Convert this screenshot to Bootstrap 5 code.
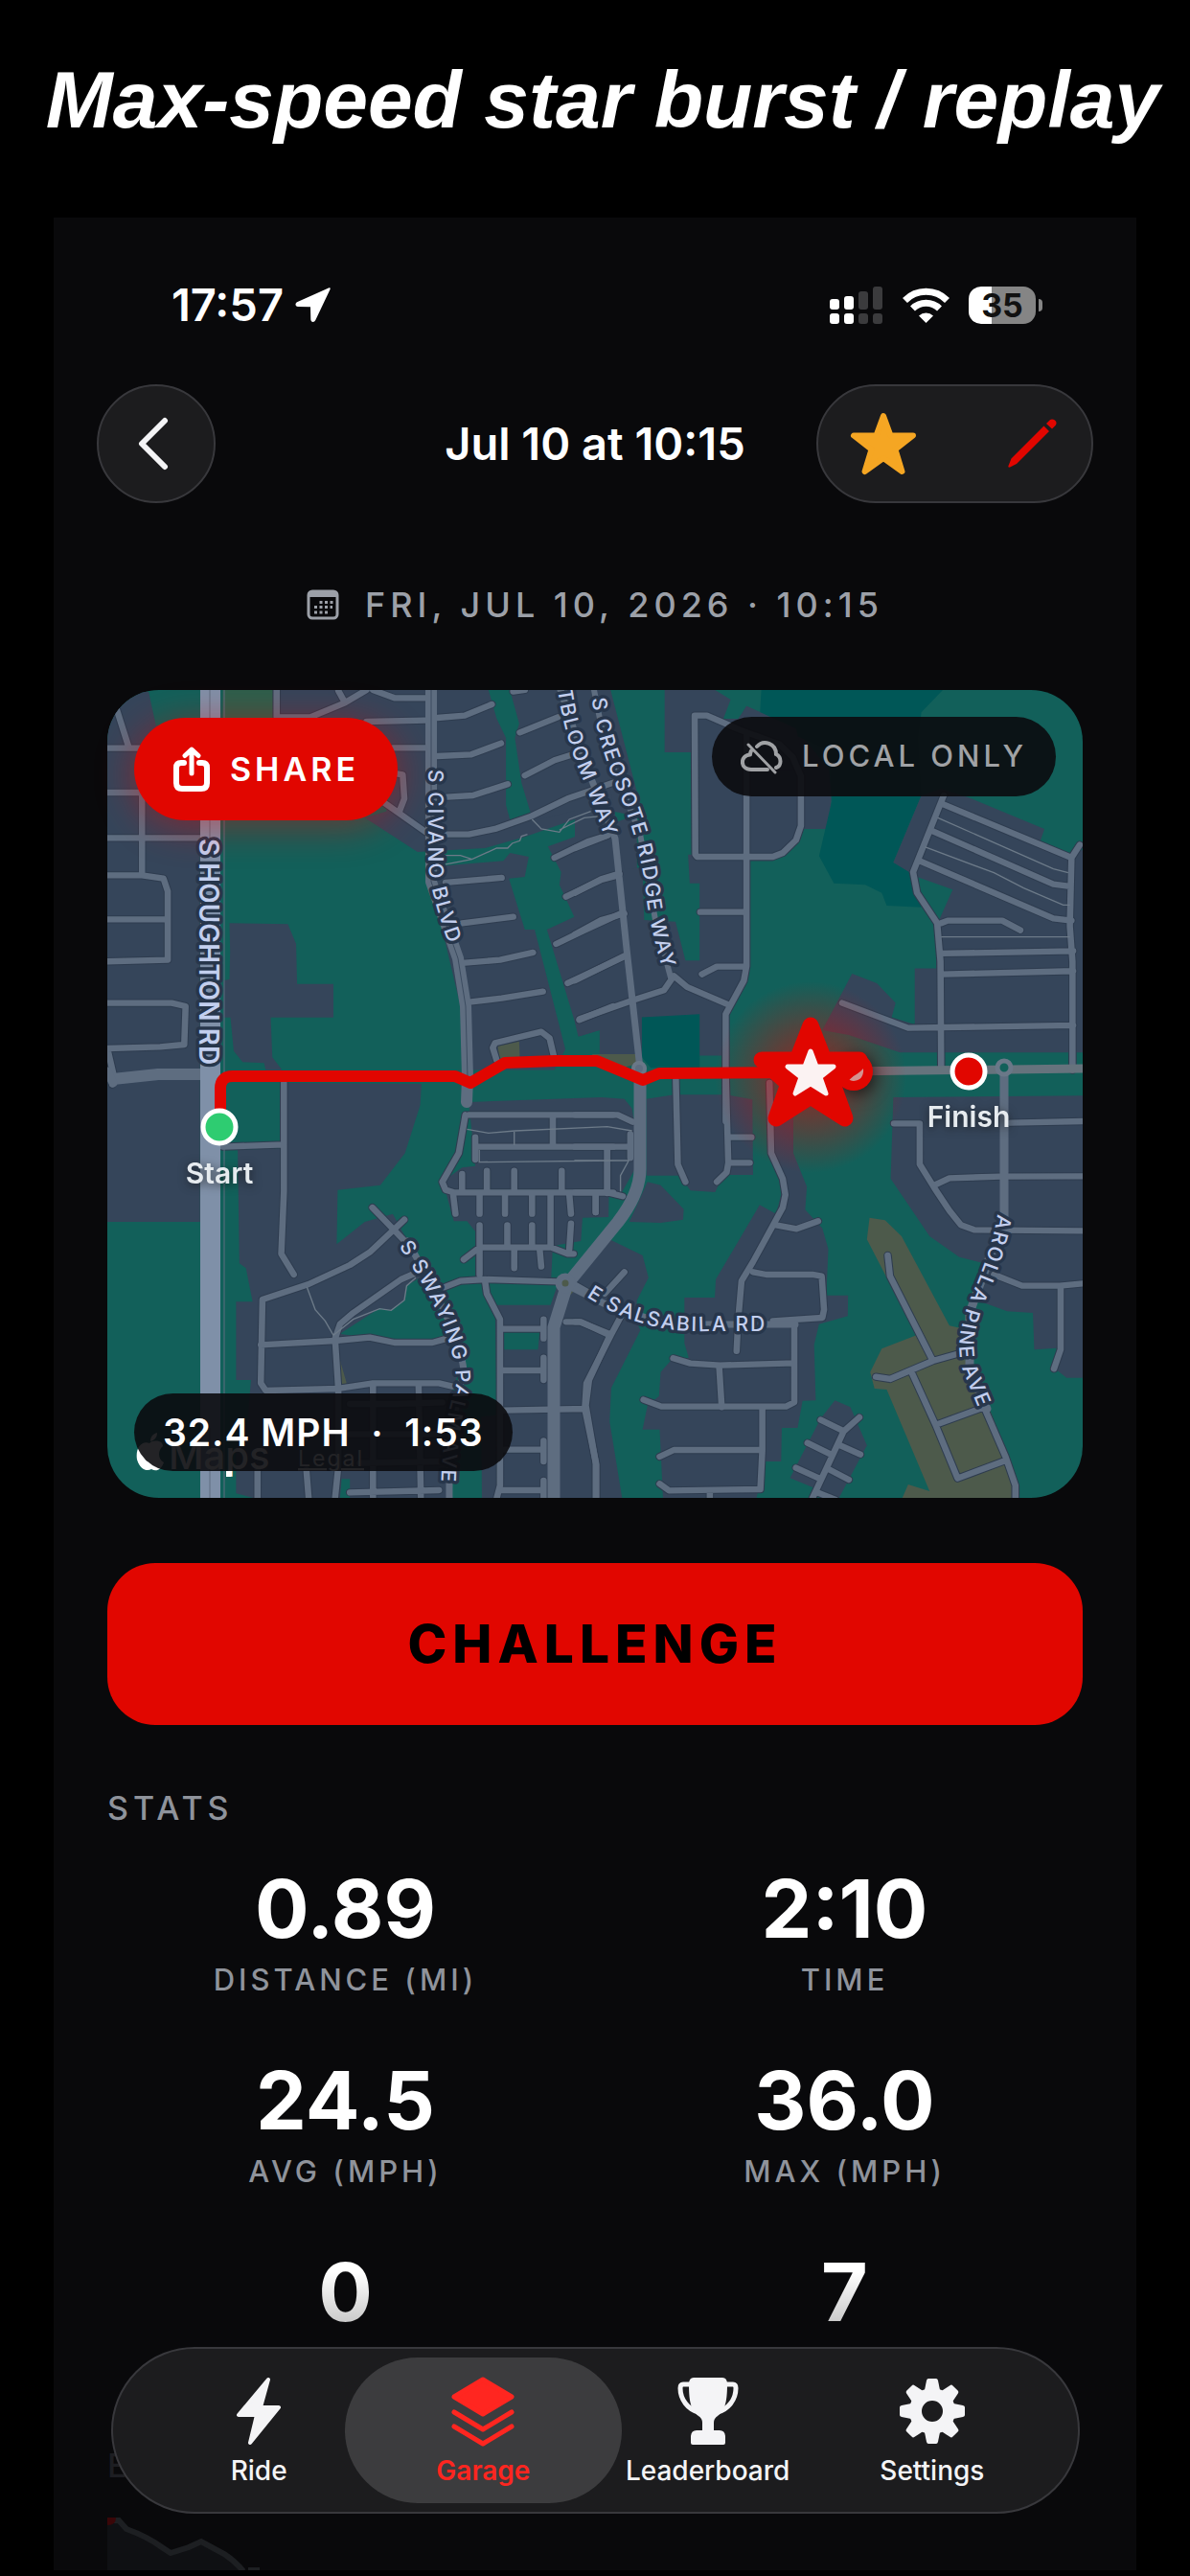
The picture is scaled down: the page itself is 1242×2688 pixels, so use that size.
<!DOCTYPE html>
<html lang="en">
<head>
<meta charset="utf-8">
<meta name="viewport" content="width=device-width, initial-scale=1">
<title>Ride detail</title>
<link href="https://cdn.jsdelivr.net/npm/bootstrap@5.3.0/dist/css/bootstrap.min.css" rel="stylesheet">
<script src="https://cdn.jsdelivr.net/npm/bootstrap@5.3.0/dist/js/bootstrap.bundle.min.js"></script>
<style>
  body { background: #000; color: #fff; font-family: Inter, "Liberation Sans", sans-serif; font-weight: 600; }
  svg { display: block; }
  .headline { height: 227px; padding: 0 0 19px 16px; font: italic 700 84px/1 "Liberation Sans", sans-serif; }
  .phone { margin: 0 56px 5px; padding: 62px 56px 0; background: #09090b; overflow: hidden; }
  .statusbar { height: 58px; padding: 0 42px 0 67px; font-size: 47px; line-height: 58px; }
  .status-time { gap: 12px; }
  .status-icons { gap: 20px; }
  .battery { width: 70px; height: 39px; border-radius: 13px; font-size: 34px; font-weight: 700; line-height: 39px; color: #111; background: linear-gradient(90deg, #fff 35%, #858585 35%); }
  .battery-tip { width: 4px; height: 13px; margin-left: 3px; border-radius: 0 4px 4px 0; background: #858585; }
  .topnav { margin: 54px -11px 0; }
  .topnav h1 { font-size: 47px; line-height: 56px; font-weight: 600; grid-column: 2; }
  .topnav-grid { display: grid; grid-template-columns: 1fr auto 1fr; align-items: center; }
  .glass { height: 124px; border: 2px solid #38383c; border-radius: 62px; background: #1c1c1e; padding: 0; color: #fff; }
  .glass-round { width: 124px; }
  .glass-pair { width: 289px; padding: 0 33px; }
  .icon-btn { background: none; border: 0; padding: 0; }
  .ride-date { margin-top: 84px; height: 44px; gap: 27px; font-size: 36px; line-height: 44px; font-weight: 500; letter-spacing: 5px; color: #9ca0a8; }
  .map-card { margin-top: 67px; border-radius: 54px; background: #12605a; }
  .map-clip { border-radius: 54px; overflow: hidden; }
  .map-clip svg { width: 100%; height: auto; }
  .map-share { left: 28px; top: 29px; height: 107px; border: 0; border-radius: 54px; padding: 0 40px; gap: 20px; background: #e10600; color: #fff; font-size: 34px; font-weight: 600; letter-spacing: 4px; box-shadow: 0 6px 40px rgba(225,6,0,.45); }
  .map-pill { background: rgba(11,11,14,.9); border-radius: 42px; }
  .map-local { right: 28px; top: 28px; height: 83px; padding: 0 30px; gap: 20px; font-size: 31px; font-weight: 500; letter-spacing: 4px; color: #a0a2a5; }
  .map-speed { left: 28px; bottom: 28px; height: 81px; padding: 0 30px; font-size: 39px; line-height: 81px; white-space: pre; letter-spacing: 1px; }
  .challenge { margin-top: 68px; height: 169px; border: 0; border-radius: 50px; background: #e10600; color: #000; font-size: 55px; font-weight: 800; letter-spacing: 6px; }
  .section-title { margin: 67px 0 43px; font-size: 34px; line-height: 40px; font-weight: 500; letter-spacing: 5px; color: #8f939b; }
  .stats-grid { row-gap: 66px; }
  .stats-grid .value { font-size: 84px; line-height: 84px; font-weight: 700; }
  .stats-grid .caption-text { margin-top: 14px; font-size: 31px; line-height: 36px; font-weight: 500; letter-spacing: 4px; color: #8f939b; }
  .stats-grid .fading { background: linear-gradient(#fff 25%, #c8c8c8 90%); -webkit-background-clip: text; background-clip: text; color: transparent; }
  .elevation-title { margin: 69px 0 34px; color: #1d1e22; }
  .tabs { left: 60px; right: 59px; bottom: 59px; height: 174px; padding: 0 35px; border: 2px solid #38383c; border-radius: 87px; background: #1c1c1e; }
  .tabs a { flex: 1 1 0; padding-top: 28px; color: #f4f4f6; font-size: 28px; line-height: 32px; font-weight: 500; }
  .tabs a svg { margin-bottom: 9px; }
  .tabs a.current { color: #ff2620; font-weight: 600; }
  .tabs a.current::before { content: ""; position: absolute; inset: 9px -27px; border-radius: 76px; background: #3c3c3e; }
  .tabs a.current > * { position: relative; }
  .slate { fill: #35455a; } .olive { fill: #4d5a4b; } .deep { fill: #005757; }
  .road { fill: none; stroke: #5e6d80; stroke-width: 19; stroke-linecap: round; stroke-linejoin: round; }
  .edge { fill: none; stroke: #2e3c4f; stroke-width: 25; stroke-linecap: round; stroke-linejoin: round; }
  .trail { fill: none; stroke: #6c7a88; stroke-width: 4; }
  .street { font: 500 21px Inter, sans-serif; fill: #c3cfee; stroke: #27364b; stroke-width: 7px; paint-order: stroke; stroke-linejoin: round; letter-spacing: 2px; }
  .street .arterial { font-size: 28px; font-weight: 600; letter-spacing: 0; }
  .pin-label { font: 600 30px Inter, sans-serif; fill: #e6ebef; text-anchor: middle; filter: drop-shadow(0 2px 5px #111a); }
</style>
</head>
<body>
<header class="headline d-flex align-items-center justify-content-center text-nowrap">Max-speed star burst / replay</header>

<main class="phone position-relative">
  <div class="statusbar d-flex align-items-center justify-content-between">
    <div class="status-time d-flex align-items-center"><span>17:57</span>
      <svg width="38" height="38" viewBox="0 0 38 38" fill="#fff"><path d="M35 1.500 2.500 16C-.5 17.500 0 21 3 21l13 .3.3 13c0 3 3.600 3.700 5 .7L36.500 3C37 1.500 36.500 1 35 1.500Z"/></svg>
    </div>
    <div class="status-icons d-flex align-items-center">
      <svg width="56" height="39" viewBox="0 0 56 39"><g fill="#fff"><rect x="0" y="13" width="10" height="11" rx="3"/><rect x="15" y="10" width="10" height="14" rx="3"/><rect x="0" y="28" width="10" height="11" rx="3"/><rect x="15" y="28" width="10" height="11" rx="3"/></g><g fill="#3b3b3d"><rect x="30" y="5" width="10" height="19" rx="3"/><rect x="45" y="0" width="10" height="24" rx="3"/><rect x="30" y="28" width="10" height="11" rx="3"/><rect x="45" y="28" width="10" height="11" rx="3"/></g></svg>
      <svg width="49" height="37" viewBox="0 0 49 37" fill="none" stroke="#fff" stroke-width="7"><path d="M2.500 13.500a31 31 0 0 1 44 0M10.500 22a20 20 0 0 1 28 0"/><path d="M24.500 37 17 29.500a11 11 0 0 1 15 0Z" fill="#fff" stroke="none"/></svg>
      <div class="d-flex align-items-center"><div class="battery text-center">35</div><div class="battery-tip"></div></div>
    </div>
  </div>

  <nav class="topnav topnav-grid" aria-label="Ride">
    <button class="glass glass-round d-flex align-items-center justify-content-center" aria-label="Back"><svg width="40" height="56" viewBox="0 0 40 56" fill="none" stroke="#f4f4f6" stroke-width="6" stroke-linecap="round" stroke-linejoin="round"><path d="M29 4 5 28l24 24"/></svg></button>
    <h1 class="m-0 text-nowrap">Jul 10 at 10:15</h1>
    <div class="glass glass-pair d-flex align-items-center justify-content-between ms-auto">
      <button class="icon-btn" aria-label="Favourite"><svg width="70" height="68" viewBox="0 0 70 68" fill="#f5a623" stroke="#f5a623" stroke-width="6" stroke-linejoin="round"><path d="M35 5 42.500 25.500H66L47.500 40 54.500 63 35 49 15.500 63 22.500 40 4 25.500H27.500Z"/></svg></button>
      <button class="icon-btn" aria-label="Edit"><svg width="54" height="52" viewBox="0 0 54 52" fill="#e10600"><path d="M37.500 7.500 43 13 9 47 2 50.500C.5 51 0 50 .5 49L3.500 41.500ZM40 5 43.500 1.500C45 0 47 0 49 1.500S51 5.500 49.500 7L46 10.500Z"/></svg></button>
    </div>
  </nav>

  <div class="ride-date d-flex align-items-center justify-content-center text-nowrap">
    <svg width="34" height="32" viewBox="0 0 34 32"><rect x="2" y="2" width="30" height="28" rx="4" fill="none" stroke="#9ca0a8" stroke-width="3"/><path d="M2 3h30v5H2Z" fill="#9ca0a8"/><path d="M13.500 13.500h14M8 18.500h19M8 24h14" stroke="#9ca0a8" stroke-width="3" stroke-dasharray="3 2.500"/></svg>
    <span>FRI, JUL 10, 2026 · 10:15</span>
  </div>

  <section class="map-card position-relative" aria-label="Route map">
    <div class="map-clip">
    <svg viewBox="112 720 1018 843">
      <defs>
        <radialGradient id="glow"><stop offset=".3" stop-color="#e10600" stop-opacity=".45"/><stop offset="1" stop-color="#e10600" stop-opacity="0"/></radialGradient>
        <path id="houghton" d="M208 875V1140"/>
        <path id="civano" d="M447 803V900Q449 940 482 1020"/>
        <path id="bloom" d="M581 712Q588 765 605 805Q618 835 640 900"/>
        <path id="creosote" d="M618 729Q622 770 645 825Q668 880 674 930Q678 975 704 1050"/>
        <path id="swaying" d="M416 1300Q477 1390 476 1445Q457 1500 461 1600"/>
        <path id="salsabila" d="M612 1353Q670 1392 740 1389H850"/>
        <path id="arolla" d="M1041 1267Q1036 1300 1017 1345Q992 1400 1007 1435L1040 1515"/>

        <g id="net-nw">
          <path d="M60 500 100 630M35 632H200M35 771H140M140 771V1030M35 913H318M35 1030H140L205 1040 218 1080V1295L35 1300M35 1168H218"/>
          <path d="M548 452V535H650L755 490 735 452M755 490 820 450M840 450 905 475H1000M1035 537 1118 530 1200 495M820 549 1000 545M900 631H1000M1035 657 1138 652 1228 617M1065 785 1143 780 1248 745M1050 902H1130L1210 885 1320 845 1430 790 1500 765 1568 740M912 712 930 715 935 790 920 830M870 800 1000 895M1060 1053 1230 1038M1110 1180 1265 1160M1265 455 1300 450M1285 583 1400 535M1300 718 1390 670 1450 650M1390 975 1490 925 1550 905M1425 1097 1530 1045 1585 1030M1395 1245 1475 1205 1590 1150M1430 1368 1600 1285M1465 1483 1568 1440"/>
          <path d="M1110 1305 1225 1295 1325 1272M1125 1428 1230 1415 1355 1394M1215 1610 1203 1570 1210 1555 1350 1520 1375 1540 1390 1605"/>
        </g>
        <g id="net-ne">
          <path d="M365 965 363 530H400L500 575 620 620 660 660 685 720V875L670 920 630 960 600 972H370ZM520 590V1315L512 1360 457 1465V1800M380 1145H520M385 1340 430 1316H515M465 1435 340 1380 300 1345 270 1390 180 1420 15 1480M0 1085 80 1042 135 1025M0 1215 80 1170 150 1150M0 945 100 905M0 1360 155 1280"/>
          <path d="M1118 780 1025 1020 1037 1085 1098 1180 1108 1300 1110 1640M1110 805 1505 975 1530 935M1080 890 1450 1058 1500 1065M1045 985 1450 1165 1505 1172M1505 975 1500 1190 1508 1300V1640M1110 1180 1130 1172H1295L1350 1202M1110 1275 1510 1267M1115 1340 1510 1330M810 1430 1010 1508 1510 1500"/>
        </g>
        <g id="net-w">
          <path d="M35 290H230L272 300 268 420 195 427 35 432M37 440 55 520 50 545M385 740 570 733M570 540V880L562 1075 600 1140M1130 640H1568M1385 640V740M1150 710V780M1150 740H1568M1550 740V880M1120 640 1100 760 1050 850 1060 875 1085 883H1568M1110 825V880M1185 815V880M1268 815V880M1412 815V880M1083 890 1090 950M1163 890V950M1240 890V950M1322 890V950M1378 890V1050M1435 890 1440 950M1515 890V945M1163 985V1140M1247 985V1050M1322 985V1050M1440 980 1435 1060M1115 1093 1163 1055H1380L1430 1075H1448M1268 1060V1120M1345 1060 1350 1115"/>
        </g>
        <g id="net-e">
          <path d="M0 640H130L175 662M0 740H168M168 700V775M98 740V885M0 883H98L145 895M63 890V945M306 530 312 795 335 850M457 500 465 790 460 820 430 850M470 710H535M470 790H530M590 540 595 760 630 840 638 890 630 930 540 1100 505 1160 495 1280 490 1380M610 985 672 997 737 973M967 667H1045M1320 665 1539 660M1045 667V795L1090 870 1135 940 1170 985 1210 1000 1539 1003M1090 860 1135 838 1290 833 1539 832"/>
        </g>
        <g id="net-sw">
          <path d="M838 30 950 150M935 68 830 170 770 210 645 270 505 318 500 580 515 603 735 597 840 580H1040L1080 590M500 460 725 447 830 437 905 453H1020L1065 440M735 600 725 440 740 395 780 360 925 255 965 237M735 600 735 840 725 940M840 580V940M978 580 985 940M490 850V940M638 850 645 940M770 922 1040 915M770 645H910L1050 640M770 740H1040M800 830 1050 825M1055 280 1105 260 1180 255 1400 262M1180 265 1185 300 1225 380V900L1215 940M1225 410H1357M1357 380V440M1225 540H1357M1357 500V570M1235 665 1485 660M1240 788H1357M1357 760V825M1225 915H1357M1357 885V940M1440 265 1500 300M1425 388H1470L1558 430 1495 570 1485 650 1515 830V940"/>
        </g>
        <g id="net-se">
          <path d="M0 388H15L110 428 35 580 30 660 65 835V940M150 232 90 300M110 428 140 370M540 232 580 240H720L748 245 755 350 750 375 600 385M665 385V640L640 653H262L208 632M298 502 350 518 440 524 665 517M437 524 445 655M568 655V790L562 912 285 916 257 895M257 810 300 789H565M409 920V940M745 695 815 730 862 687M815 730 720 940M705 767 780 805M670 845 745 880M805 775 865 803M770 850 830 882M730 920 790 945M948 180 955 245 1085 510M912 560 955 567 1085 510 1165 487M1020 545 1095 715 1160 878 1305 822M1095 710 1240 655M1240 655 1305 810 1335 900V940M1270 240 1355 275H1470L1539 268M1472 275V475L1452 535"/>
        </g>
      </defs>

      <!-- land cover -->
      <g transform="translate(100 570) scale(.3444 .3333)">
        <path class="slate" d="M35 450 160 455 182 560 316 600V2115H35Z"/>
        <path fill="#2c5f4c" d="M385 450H540L548 540H385Z"/>
        <path class="slate" d="M540 450H1190L1215 540 1243 600V810L1258 867 1490 785 1520 830 1300 910 1180 945 975 957 815 850 880 830 912 700 800 540H548Z"/>
        <path class="slate" d="M1255 450H1560L1660 850 1520 820 1500 815 1325 860 1290 740 1270 600 1283 555Z"/>
        <path class="slate" d="M1005 1000H1060L1235 985 1255 960 1312 972 1300 1035 1252 1040 1300 1200H1330L1423 1575 1390 1640H1110L1105 1440 1050 1200Z"/>
        <path class="slate" d="M1370 940 1640 840V1530L1525 1515 1465 1535 1367 1200 1450 1160 1405 1060 1410 1020Z"/>
      </g>
      <g transform="translate(600 570) scale(.3444 .3333)">
        <path class="slate" d="M0 450H50L120 830 150 1012 205 1005 210 1170 305 1175 335 1297H378V1055H348L343 965H355V645H272V450H425L472 480 450 540H495L520 500 670 570 770 700 778 790 767 885H690L600 985H528V1340L465 1460V1595H75V1515L10 1535 0 1490Z"/>
        <path class="deep" d="M203 1475 378 1465V1633H230L203 1600ZM565 450H1115L1050 520 1040 600 1050 780 965 990 1037 1020 1030 1070 1050 1130 945 1125 930 1085 880 1060 785 1055 740 970 778 800 770 640 560 540Z"/>
        <path class="slate" d="M1050 780 1110 760 1190 785 1423 885 1410 925 1500 965 1539 950V1585L985 1585 830 1530 750 1515 840 1338 915 1368 972 1430 960 1475 1030 1497V1322H1095V1190L1145 1075 1037 1035 965 990Z"/>
        <path class="slate" d="M500 540 520 500 670 570 700 700 560 700Z"/>
        <path class="olive" d="M50 1590H185L190 1620 120 1640Z"/>
      </g>
      <g transform="translate(100 950) scale(.3444 .3333)">
        <path class="slate" d="M405 40 582 43 607 105 610 230H720V335H530L535 460 565 500H515L510 478 445 475 418 440 408 335H388V220L405 215 407 130Z"/>
        <path class="slate" d="M1130 600 1532 585 1602 590 1625 620 1650 780 1590 890H1555L1554 960 1475 962 1470 1035 1385 1050 1380 1150H1150V1005L1125 973H1085L1060 880 1050 850 1110 805 1150 800Z"/>
        <path class="olive" d="M1218 425 1283 410 1285 465 1225 475Z"/>
      </g>
      <g transform="translate(600 950) scale(.3444 .3333)">
        <path class="slate" d="M217 590 300 577H460L538 592 540 828H450L425 882 350 877 318 830H217ZM165 975 220 850 260 860 330 935 328 968 260 978Z"/>
      </g>
      <g transform="translate(100 1250) scale(.3444 .3333)">
        <path class="slate" d="M430-150 560-155 575-360 987-357 983-290 937-140 862-40 733-25 730 145 815 75 900 50 1000 240 940 275 935 320 895 352 860 345 740 425 830 440 1020 455 1060 440 1110 520 1080 600 1130 700 1070 860 1080 940H770V880H745L740 940H480L425 925V780L460 700 470 570H425V325H475L455 220 435 205Z"/>
        <path class="slate" d="M1210 335H1378L1400 270 1440 230 1557 130 1657 180 1675 250 1640 320 1637 380 1650 415 1562 595 1557 700 1595 940H1170L1168 685 1215 680Z"/>
        <path fill="#12605a" d="M1237 420H1345L1340 475H1237Z"/>
        <path class="olive" d="M735 490 760 580 745 600ZM1400 270 1435 255 1450 290 1415 330Z"/>
      </g>
      <g transform="translate(600 1250) scale(.3444 .3333)">
        <path class="slate" d="M598-300 662-260V-140L703-35 698 37 750 95 768 160 762 305H828L827 370 740 395 725 460 730 634 690 635 675 720H627L625 825 578 825 550 940H267L257 725H205L220 650 255 620 260 545 290 510 345 500 332 455V312H424L427 255 560 22 610 50 635-50 600-140Z"/>
        <path class="slate" d="M788 634 835 655 885 775 800 940 652 877 745 690Z"/>
        <path class="olive" d="M893 62 940 70 990 120 1135 400 1170 408V480L1260 670 1330 860 1340 940H992L1010 897 1075 918 945 600 908 597 895 545 930 472 1035 430 885 130Z"/>
        <path class="slate" d="M965-315 1539-320V563H1490L1450 530 1460 470 1392 475 1388 360 1310 355 1230 325 1240 205 1165 185 1075 120 990-10 957-60Z"/>
      </g>

      <!-- road casings, then road surfaces -->
      <g class="edge">
        <use href="#net-nw" transform="translate(100 570) scale(.3444 .3333)"/><use href="#net-ne" transform="translate(600 570) scale(.3444 .3333)"/>
        <use href="#net-w" transform="translate(100 950) scale(.3444 .3333)"/><use href="#net-e" transform="translate(600 950) scale(.3444 .3333)"/>
        <use href="#net-sw" transform="translate(100 1250) scale(.3444 .3333)"/><use href="#net-se" transform="translate(600 1250) scale(.3444 .3333)"/>
      </g>
      <g class="road">
        <use href="#net-nw" transform="translate(100 570) scale(.3444 .3333)"/><use href="#net-ne" transform="translate(600 570) scale(.3444 .3333)"/>
        <use href="#net-w" transform="translate(100 950) scale(.3444 .3333)"/><use href="#net-e" transform="translate(600 950) scale(.3444 .3333)"/>
        <use href="#net-sw" transform="translate(100 1250) scale(.3444 .3333)"/><use href="#net-se" transform="translate(600 1250) scale(.3444 .3333)"/>
      </g>
      <!-- main roads -->
      <g fill="none" stroke-linejoin="round" stroke-linecap="round">
        <path d="M450 720V920L478 1000 486 1050 488 1125 487 1150" stroke="#5e6d80" stroke-width="12"/>
        <path d="M450 720V920L478 1000 486 1050 488 1125" stroke="#3c4c60" stroke-width="1"/>
        <path d="M118 1126 165 1121H222" stroke="#5e6d80" stroke-width="12"/>
        <path d="M112 1118 118 1130" stroke="#5e6d80" stroke-width="9"/>
        <path d="M585 720 612 800 642 875 654 990 668 1115" stroke="#5e6d80" stroke-width="7"/>
        <path d="M620 720 628 760 640 800 668 870 684 960 700 1020" stroke="#5e6d80" stroke-width="6"/>
        <path d="M668 1115V1220Q668 1245 645 1275L592 1340 578 1385V1563" stroke="#5e6d80" stroke-width="13"/>
        <path d="M800 1119 1130 1115" stroke="#66737d" stroke-width="9"/>
        <path d="M1048 1120V1270L1012 1370V1430L1030 1470" stroke="#5e6d80" stroke-width="9"/>
        <path d="M590 1340 640 1365 700 1382H830" stroke="#5e6d80" stroke-width="7"/>
        <path d="M425 1295Q480 1390 484 1430 468 1490 469 1563" stroke="#5e6d80" stroke-width="7"/>
        <circle cx="1048" cy="1114" r="7" stroke="#6a7888" stroke-width="5" fill="#12605a"/>
        <circle cx="667" cy="1115" r="6" stroke="#6a7888" stroke-width="4"/>
        <circle cx="590" cy="1339" r="7" stroke="#5e6d80" stroke-width="7" fill="#4d5a4b"/>
      </g>
      <path d="M209 720H230V1563H209Z" fill="#7f90a8"/><path d="M219 720V875M219 1490V1563M234 720V1563" stroke="#5f6d80" stroke-width="1"/>
      <!-- footpaths -->
      <g transform="translate(100 570) scale(.3444 .3333)"><path class="trail" d="M1060 968H1105L1140 980 1215 945H1248L1262 930 1285 922 1290 908 1308 902M1060 996 1140 980M1322 855 1350 885 1405 895 1435 855 1500 830M1405 888 1480 850 1530 845"/></g>
      <g transform="translate(600 570) scale(.3444 .3333)"><path class="trail" d="M1100 850 1450 1010 1495 1022M1062 942 1270 1022 1360 1070 1480 1123H1500M1110 1223H1500"/></g>
      <g transform="translate(100 950) scale(.3444 .3333)"><path class="trail" d="M1125 685 1190 697 1270 690 1550 677 1625 690M1268 690V735M1162 750V788L1580 783M1450 783H1615L1590 830V880"/></g>
      <g transform="translate(100 1250) scale(.3444 .3333)"><path class="trail" d="M640 280 665 350 695 385 720 430 780 380 860 347 895 352 935 320 942 275 970 250"/></g>

      <g class="street">
        <text class="arterial"><textPath href="#houghton">S HOUGHTON RD</textPath></text>
        <text><textPath href="#civano">S CIVANO BLVD</textPath></text>
        <text><textPath href="#bloom">ITBLOOM WAY</textPath></text>
        <text><textPath href="#creosote">S CREOSOTE RIDGE WAY</textPath></text>
        <text><textPath href="#swaying">S SWAYING PALM AVE</textPath></text>
        <text><textPath href="#salsabila">E SALSABILA RD</textPath></text>
        <text><textPath href="#arolla">AROLLA PINE AVE</textPath></text>
      </g>

      <!-- map attribution -->
      <g fill="#fff">
        <path d="M156 1506c4-4 14-3 14 3-6 5-5 14 1 17-3 8-8 10-13 7-5 3-12 0-15-10-2-12 5-20 13-17ZM157 1504c0-5 3-8 7-9 0 5-3 8-7 9Z"/>
        <text x="176" y="1533" font-size="40" font-weight="500">Maps</text>
        <text x="311" y="1530" font-size="23" font-weight="400" letter-spacing="2" text-decoration="underline">Legal</text>
        <path d="M236 1535h5v6h-5Z"/>
      </g>

      <!-- ride route and markers -->
      <circle cx="846" cy="1124" r="100" fill="url(#glow)"/>
      <path d="M230 1170V1136Q230 1123 243 1123H475L491 1130 527 1109 579 1107 623 1107 671 1127 688 1120 846 1119" fill="none" stroke="#e10600" stroke-width="12" stroke-linejoin="round"/>
      <circle cx="891" cy="1118" r="20" fill="#e10600" style="filter:drop-shadow(3px 4px 8px #0009)"/>
      <path d="M901 1115q1 12-10 13-4 0-6-3 10-3 16-10Z" fill="#d4938f"/>
      <path d="M846 1070 860 1106H897L869 1131 882 1167 846 1144 810 1167 823 1131 795 1106H832Z" fill="#e10600" stroke="#e10600" stroke-width="17" stroke-linejoin="round"/>
      <path d="m846 1097 6 16h18l-14 11 6 17-16-10-16 10 6-17-14-11h18Z" fill="#fbf2f2" stroke="#fbf2f2" stroke-width="5" stroke-linejoin="round"/>
      <circle cx="229" cy="1176" r="17" fill="#2ecc71" stroke="#fff" stroke-width="5"/>
      <circle cx="1011" cy="1118" r="17" fill="#e10600" stroke="#fff" stroke-width="5"/>
      <text class="pin-label" x="229" y="1235">Start</text>
      <text class="pin-label" x="1011" y="1176">Finish</text>
    </svg>
    </div>
    <button class="map-share position-absolute d-flex align-items-center">
      <svg width="40" height="48" viewBox="0 0 40 48" fill="none" stroke="#fff" stroke-width="6" stroke-linecap="round" stroke-linejoin="round"><path d="M12 17H9q-5 0-5 5v16q0 6 6 6h20q6 0 6-6V22q0-5-5-5h-3"/><path d="M20 28V4M13 9.500 20 3l7 6.500" stroke-width="5"/></svg>
      <span>SHARE</span>
    </button>
    <div class="map-pill map-local position-absolute d-flex align-items-center text-nowrap">
      <svg width="44" height="36" viewBox="0 0 44 36" fill="none" stroke="#a0a2a5" stroke-width="4" stroke-linecap="round"><path d="M28 31H11C-1 31-1 16 10 15.500M17 7c7-8 20-3 20 8 6 3 6 12 0 14M10 15.500q0-2 1-4"/><path d="M8 5 36 34" stroke-width="3"/></svg>
      <span>LOCAL ONLY</span>
    </div>
    <div class="map-pill map-speed position-absolute">32.4 MPH  ·  1:53</div>
  </section>

  <button class="challenge d-block w-100">CHALLENGE</button>

  <h2 class="section-title">STATS</h2>
  <div class="stats-grid row gx-4 text-center">
    <div class="col-6"><div class="value">0.89</div><div class="caption-text">DISTANCE (MI)</div></div>
    <div class="col-6"><div class="value">2:10</div><div class="caption-text">TIME</div></div>
    <div class="col-6"><div class="value">24.5</div><div class="caption-text">AVG (MPH)</div></div>
    <div class="col-6"><div class="value">36.0</div><div class="caption-text">MAX (MPH)</div></div>
    <div class="col-6"><div class="value fading">0</div><div class="caption-text">&nbsp;</div></div>
    <div class="col-6"><div class="value fading">7</div><div class="caption-text">&nbsp;</div></div>
  </div>

  <h2 class="section-title elevation-title">ELEVATION</h2>
  <svg width="170" height="55" viewBox="0 0 170 55"><path d="M0 4H12L20 12 45 24 66 38 85 31 98 25 122 38 143 56H0Z" fill="#0f1013"/><path d="M0 3H12L20 12Q42 20 57 31L66 37 85 31 98 25 122 38Q134 46 142 56M147 55h12" fill="none" stroke="#1d1f22" stroke-width="6"/><path d="M0 0h9q0 8-9 8Z" fill="#3a0608"/></svg>

  <nav class="tabs position-absolute d-flex" aria-label="Main">
    <a href="#" class="position-relative text-decoration-none d-flex flex-column align-items-center">
      <svg width="48" height="74" viewBox="0 0 48 74" fill="currentColor" stroke="currentColor" stroke-width="4" stroke-linejoin="round"><path d="M34 4 3 41h19l-7 29L45 33H26Z"/></svg><span>Ride</span></a>
    <a href="#" class="current position-relative text-decoration-none d-flex flex-column align-items-center" aria-current="page">
      <svg width="68" height="74" viewBox="0 0 68 74" fill="none" stroke="currentColor" stroke-width="5" stroke-linecap="round" stroke-linejoin="round"><path d="M34 4 64 22 34 40 4 22Z" fill="currentColor"/><path d="M4 38 34 56 64 38M4 53 34 71 64 53"/></svg><span>Garage</span></a>
    <a href="#" class="position-relative text-decoration-none d-flex flex-column align-items-center">
      <svg width="64" height="74" viewBox="0 0 64 74" fill="currentColor"><path d="M17 2h30q5 0 5 7c0 20-3 28-10 33-3 2-4 4-4 7v8h6q6 0 6 7v6q0 2-2 2H16q-2 0-2-2v-6q0-7 6-7h6v-8c0-3-1-5-4-7-7-5-10-13-10-33q0-7 5-7Z"/><path d="M13 9H6q-3 0-3 4c0 12 8 22 19 25M51 9h7q3 0 3 4c0 12-8 22-19 25" fill="none" stroke="currentColor" stroke-width="5"/></svg><span>Leaderboard</span></a>
    <a href="#" class="position-relative text-decoration-none d-flex flex-column align-items-center">
      <svg width="68" height="74" viewBox="-34 -37 68 74"><g fill="currentColor"><path id="tooth" d="M-8-22-6-32q.5-2 2-2h8q1.500 0 2 2l2 10Z"/><use href="#tooth" transform="rotate(45)"/><use href="#tooth" transform="rotate(90)"/><use href="#tooth" transform="rotate(135)"/><use href="#tooth" transform="rotate(180)"/><use href="#tooth" transform="rotate(225)"/><use href="#tooth" transform="rotate(270)"/><use href="#tooth" transform="rotate(315)"/></g><circle r="17.500" fill="none" stroke="currentColor" stroke-width="13"/></svg><span>Settings</span></a>
  </nav>
</main>
</body>
</html>
